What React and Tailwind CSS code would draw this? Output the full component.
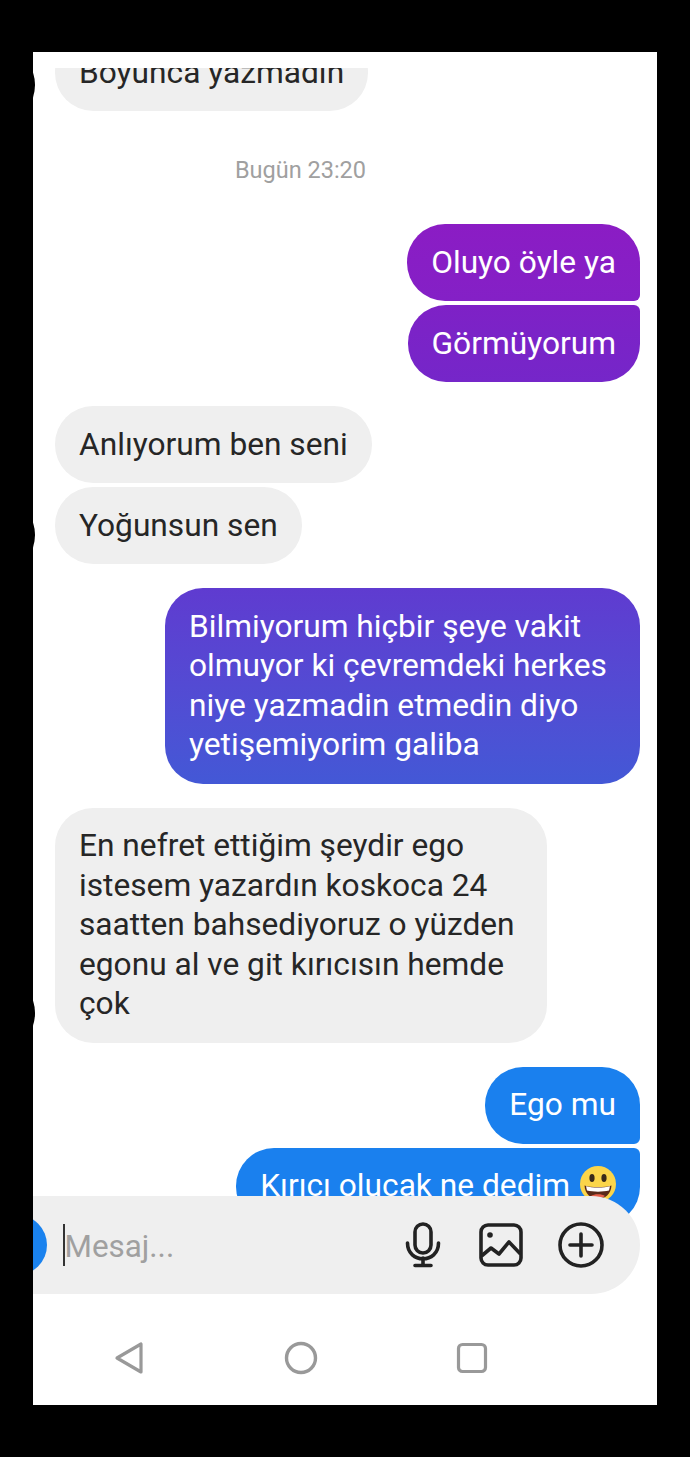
const Avatar = ({ className }) => (
  <span className={`absolute -left-[100px] w-[80px] h-[80px] rounded-full bg-black ${className}`}></span>
)

function Emoji() {
  return (
    <svg viewBox="0 0 36 36" className="inline-block w-[36px] h-[36px] ml-[10px] align-[-6px]">
      <circle cx="18" cy="18" r="18" fill="#fbd54a" />
      <ellipse cx="12" cy="12" rx="2.6" ry="4" fill="#3a2a1a" />
      <ellipse cx="24" cy="12" rx="2.6" ry="4" fill="#3a2a1a" />
      <path d="M4.5 19.5 C10 21.5 26 21.5 31.5 19.5 C31 28 25 33 18 33 C11 33 5 28 4.5 19.5 Z" fill="#5a2a1a" />
      <path d="M6 20.3 C12 22 24 22 30 20.3 L29 24.5 C23 26 13 26 7 24.5 Z" fill="#ffffff" />
      <path d="M11 30 C14 27.5 22 27.5 25 30 C22.5 32.5 13.5 32.5 11 30 Z" fill="#e8604c" />
    </svg>
  )
}

function Received({ children, avatarClass, className = '' }) {
  return (
    <div className="relative self-start">
      {avatarClass && <Avatar className={avatarClass} />}
      <div className={`bg-[#efefef] text-[#262626] rounded-[38px] px-[24px] py-[18.75px] ${className}`}>{children}</div>
    </div>
  )
}

function Sent({ children, className }) {
  return (
    <div className={`self-end text-white px-[24px] py-[18.75px] ${className}`}>{children}</div>
  )
}

function MicIcon() {
  return (
    <svg viewBox="0 0 36 46" className="w-[36px] h-[46px]" fill="none" stroke="#222" strokeWidth="3.6" strokeLinecap="round">
      <rect x="10" y="2" width="16" height="29" rx="8" />
      <path d="M2.5 21 C2.5 42 33.5 42 33.5 21" />
      <path d="M18 36 V43 M10 43.5 H26" />
    </svg>
  )
}

function ImageIcon() {
  return (
    <svg viewBox="0 0 44 44" className="w-[44px] h-[44px]" fill="none" stroke="#222" strokeWidth="3.6" strokeLinejoin="round">
      <rect x="2" y="2" width="40" height="40" rx="7" />
      <circle cx="11" cy="12" r="2.8" fill="#222" stroke="none" />
      <path d="M2.5 33 L12 25 L20 31 L30 19 L41.5 31" />
    </svg>
  )
}

function PlusIcon() {
  return (
    <svg viewBox="0 0 46 46" className="w-[46px] h-[46px]" fill="none" stroke="#222" strokeWidth="3.6" strokeLinecap="round">
      <circle cx="23" cy="23" r="21" />
      <path d="M23 12 V34 M12 23 H34" />
    </svg>
  )
}

export default function App() {
  return (
    <div className="bg-black h-[1457px] pt-[52px] pl-[33px] font-['Roboto',sans-serif]">
      <div className="w-[624px] h-[1353px] bg-white flex flex-col pt-[16px]">
        <div className="h-[1172px] overflow-hidden pr-[17px] pl-[22px] text-[31.7px] leading-[39.5px]">
          <div className="flex flex-col">
            <div className="-mt-[34px]"></div>
            <Received avatarClass="top-[11px]">Boyunca yazmadın</Received>

            <div className="pr-[94px] text-center text-[#a0a0a0] text-[23.5px] leading-[30px] mt-[44px] mb-[39px]">Bugün 23:20</div>

            <Sent className="bg-gradient-to-b from-[#8b1cc4] to-[#8420c6] rounded-l-[38px] rounded-tr-[38px] rounded-br-[6px]">Oluyo öyle ya</Sent>
            <Sent className="mt-[4px] bg-gradient-to-b from-[#7e21c6] to-[#7526c9] rounded-l-[38px] rounded-br-[38px] rounded-tr-[6px]">Görmüyorum</Sent>

            <div className="mt-[24px]"></div>
            <Received>Anlıyorum ben seni</Received>
            <div className="mt-[4px]"></div>
            <Received avatarClass="top-[8px]">Yoğunsun sen</Received>

            <Sent className="mt-[24px] w-[475px] rounded-[38px] bg-gradient-to-b from-[#5f3bd0] to-[#4358d6]">
              Bilmiyorum hiçbir şeye vakit<br />olmuyor ki çevremdeki herkes<br />niye yazmadin etmedin diyo<br />yetişemiyorim galiba
            </Sent>

            <div className="mt-[24px]"></div>
            <Received avatarClass="top-[165px]" className="w-[492px]">
              En nefret ettiğim şeydir ego<br />istesem yazardın koskoca 24<br />saatten bahsediyoruz o yüzden<br />egonu al ve git kırıcısın hemde<br />çok
            </Received>

            <Sent className="mt-[24px] bg-[#1a80ee] rounded-l-[38px] rounded-tr-[38px] rounded-br-[6px]">Ego mu</Sent>
            <Sent className="mt-[4px] bg-[#1a80ee] rounded-l-[38px] rounded-br-[38px] rounded-tr-[6px] whitespace-nowrap">
              Kırıcı olucak ne dedim<Emoji />
            </Sent>
          </div>
        </div>

        <div className="relative -mt-[44px] w-[607px] h-[98px] bg-[#efefef] rounded-r-[49px] flex items-center overflow-hidden">
          <span className="shrink-0 -ml-[46px] w-[60px] h-[60px] rounded-full bg-[#1a82ee]"></span>
          <span className="ml-[16px] w-[1.5px] h-[42px] bg-[#333]"></span>
          <span className="mt-[3px] text-[31.4px] text-[#a0a0a0]">Mesaj...</span>
          <div className="ml-auto mr-[36px] flex items-center gap-[35px]">
            <span className="mr-[3px]"><MicIcon /></span>
            <ImageIcon />
            <PlusIcon />
          </div>
        </div>

        <div className="flex-1 flex items-center pl-[81px] pt-[16px] gap-[138px]">
          <svg viewBox="0 0 32 34" className="w-[32px] h-[34px]" fill="none" stroke="#999" strokeWidth="3.2" strokeLinejoin="round">
            <path d="M27 3 V31 L3 17 Z" />
          </svg>
          <svg viewBox="0 0 34 34" className="w-[34px] h-[34px]" fill="none" stroke="#999" strokeWidth="3.4">
            <circle cx="17" cy="17" r="14.5" />
          </svg>
          <svg viewBox="0 0 32 32" className="w-[32px] h-[32px]" fill="none" stroke="#999" strokeWidth="3.2">
            <rect x="2.5" y="2.5" width="27" height="27" rx="4" />
          </svg>
        </div>
      </div>
    </div>
  )
}
